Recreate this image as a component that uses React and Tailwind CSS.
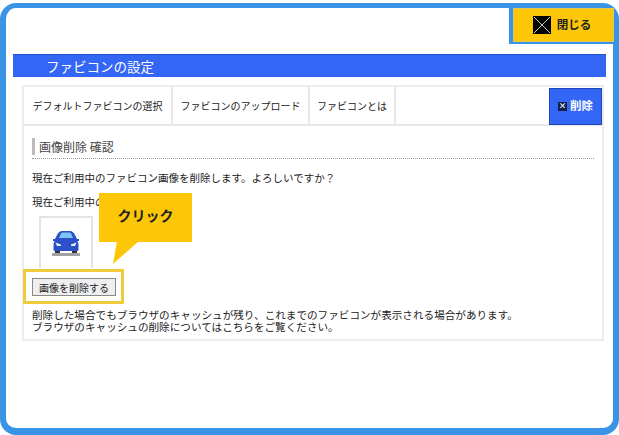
const font = { fontFamily: '"Noto Sans CJK JP", "Noto Sans CJK SC", sans-serif' };

function CarIcon() {
  return (
    <svg width="28" height="27" viewBox="0 0 28 27">
      <path d="M5 5 Q7 1 10 1 L18 1 Q21 1 23 5 L25 9 L27 9 L27 11 L25.500 11 Q26.500 13 26.500 15 L26.500 20 Q26.500 21 25 21 L3 21 Q1.500 21 1.500 20 L1.500 15 Q1.500 13 2.500 11 L1 11 L1 9 L3 9 Z" fill="#2b50c8" />
      <path d="M7 8 L9 3.500 Q9.500 2.500 11 2.500 L17 2.500 Q18.500 2.500 19 3.500 L21 8 Z" fill="#7cc4f5" />
      <path d="M3.500 12.500 L9 14.500 L9 16 L5 16 Z" fill="#e8eef8" />
      <path d="M24.500 12.500 L19 14.500 L19 16 L23 16 Z" fill="#e8eef8" />
      <rect x="3" y="21" width="5" height="2" fill="#333" />
      <rect x="20" y="21" width="5" height="2" fill="#333" />
      <rect x="0" y="23" width="28" height="3" fill="#a3a3a3" />
    </svg>
  );
}

function Tab({ label, className }) {
  return (
    <div className={`flex items-center justify-center h-full border-r-2 border-[#e8e8e8] text-[10px] text-[#222] ${className}`}>
      {label}
    </div>
  );
}

export default function App() {
  return (
    <div className="w-[619px] h-[435px] bg-white pt-[3px] overflow-hidden" style={font}>
      <div className="relative h-[432px] w-[619px] border-x-[6px] border-t-[5px] border-b-[7px] border-[#3a94e6] rounded-[16px] bg-white">
        {/* 閉じるボタン */}
        <div className="flex justify-end h-[36px]">
          <div className="w-[105px] h-[36px] bg-[#3a94e6] pl-[4px] pb-[2px] -mr-[1px]">
            <div className="flex items-center justify-center gap-[6px] h-full bg-[#fdc707] border border-[#e0c860] pr-[3px]">
              <svg width="18" height="18" viewBox="0 0 18 18" className="bg-black">
                <path d="M1 1 L17 17 M17 1 L1 17" stroke="#fff" strokeWidth="0.8" />
              </svg>
              <span className="text-[11.5px] font-bold text-[#222]">閉じる</span>
            </div>
          </div>
        </div>

        <div className="ml-[7px] mr-[7px] mt-[10px] h-[23px] bg-[#3366f5] border-t border-[#2450c8] pl-[33px] flex items-center text-[13.5px] text-white">
          ファビコンの設定
        </div>

        {/* パネル */}
        <div className="ml-[16px] mr-[9px] mt-[8px] h-[256px] border-2 border-[#ececec] bg-white">
          <div className="flex items-center h-[39px] border-b-2 border-[#e8e8e8]">
            <Tab label="デフォルトファビコンの選択" className="w-[149px]" />
            <Tab label="ファビコンのアップロード" className="w-[137px]" />
            <Tab label="ファビコンとは" className="w-[86px]" />
            <div className="ml-auto w-[53px] h-[37px] mt-[1px] bg-[#3366f5] border border-[#1f47b8] flex items-center justify-center gap-[3px] text-[11.5px] font-bold text-white">
              <span className="flex items-center justify-center w-[9px] h-[9px] bg-[#10204a] text-[8px] leading-none text-white">×</span>
              削除
            </div>
          </div>

          <div className="pl-[8px] pr-[8px] pt-[12px]">
            <div className="border-b border-dotted border-[#999] pb-[3px]">
              <div className="border-l-[3px] border-[#bbb] pl-[4px] h-[17px] flex items-center text-[12px] text-[#444]">
                画像削除 確認
              </div>
            </div>
            <p className="mt-[11px] text-[10.5px] leading-[16px] text-[#222]">現在ご利用中のファビコン画像を削除します。よろしいですか？</p>
            <p className="mt-[8px] text-[10.5px] leading-[16px] text-[#222]">現在ご利用中の</p>
            <div className="ml-[7px] mt-[6px] w-[54px] h-[52px] border-2 border-b-0 border-[#e4e4e4] flex items-center justify-center bg-white">
              <CarIcon />
            </div>
            <div className="mt-[10px] w-[84px] h-[18px] border border-[#888] bg-[#efefef] flex items-center justify-center text-[10px] text-[#222]">
              画像を削除する
            </div>
            <p className="mt-[13px] text-[10.6px] leading-[12px] text-[#222]">
              削除した場合でもブラウザのキャッシュが残り、これまでのファビコンが表示される場合があります。
              <br />
              ブラウザのキャッシュの削除についてはこちらをご覧ください。
            </p>
          </div>
        </div>

        {/* 吹き出し */}
        <div className="absolute left-[93px] top-[185px] w-[93px] h-[49px] bg-[#fdc707] flex items-center justify-center pb-[5px] text-[14px] font-bold text-[#222]">
          クリック
        </div>
        <svg className="absolute left-[105px] top-[233px]" width="30" height="24" viewBox="0 0 30 24">
          <path d="M6 0 L2 23 L28 0 Z" fill="#fdc707" />
        </svg>
        <div className="absolute left-[17px] top-[261px] w-[101px] h-[35px] border-[3px] border-[#f0cb3c]" />
      </div>
    </div>
  );
}
